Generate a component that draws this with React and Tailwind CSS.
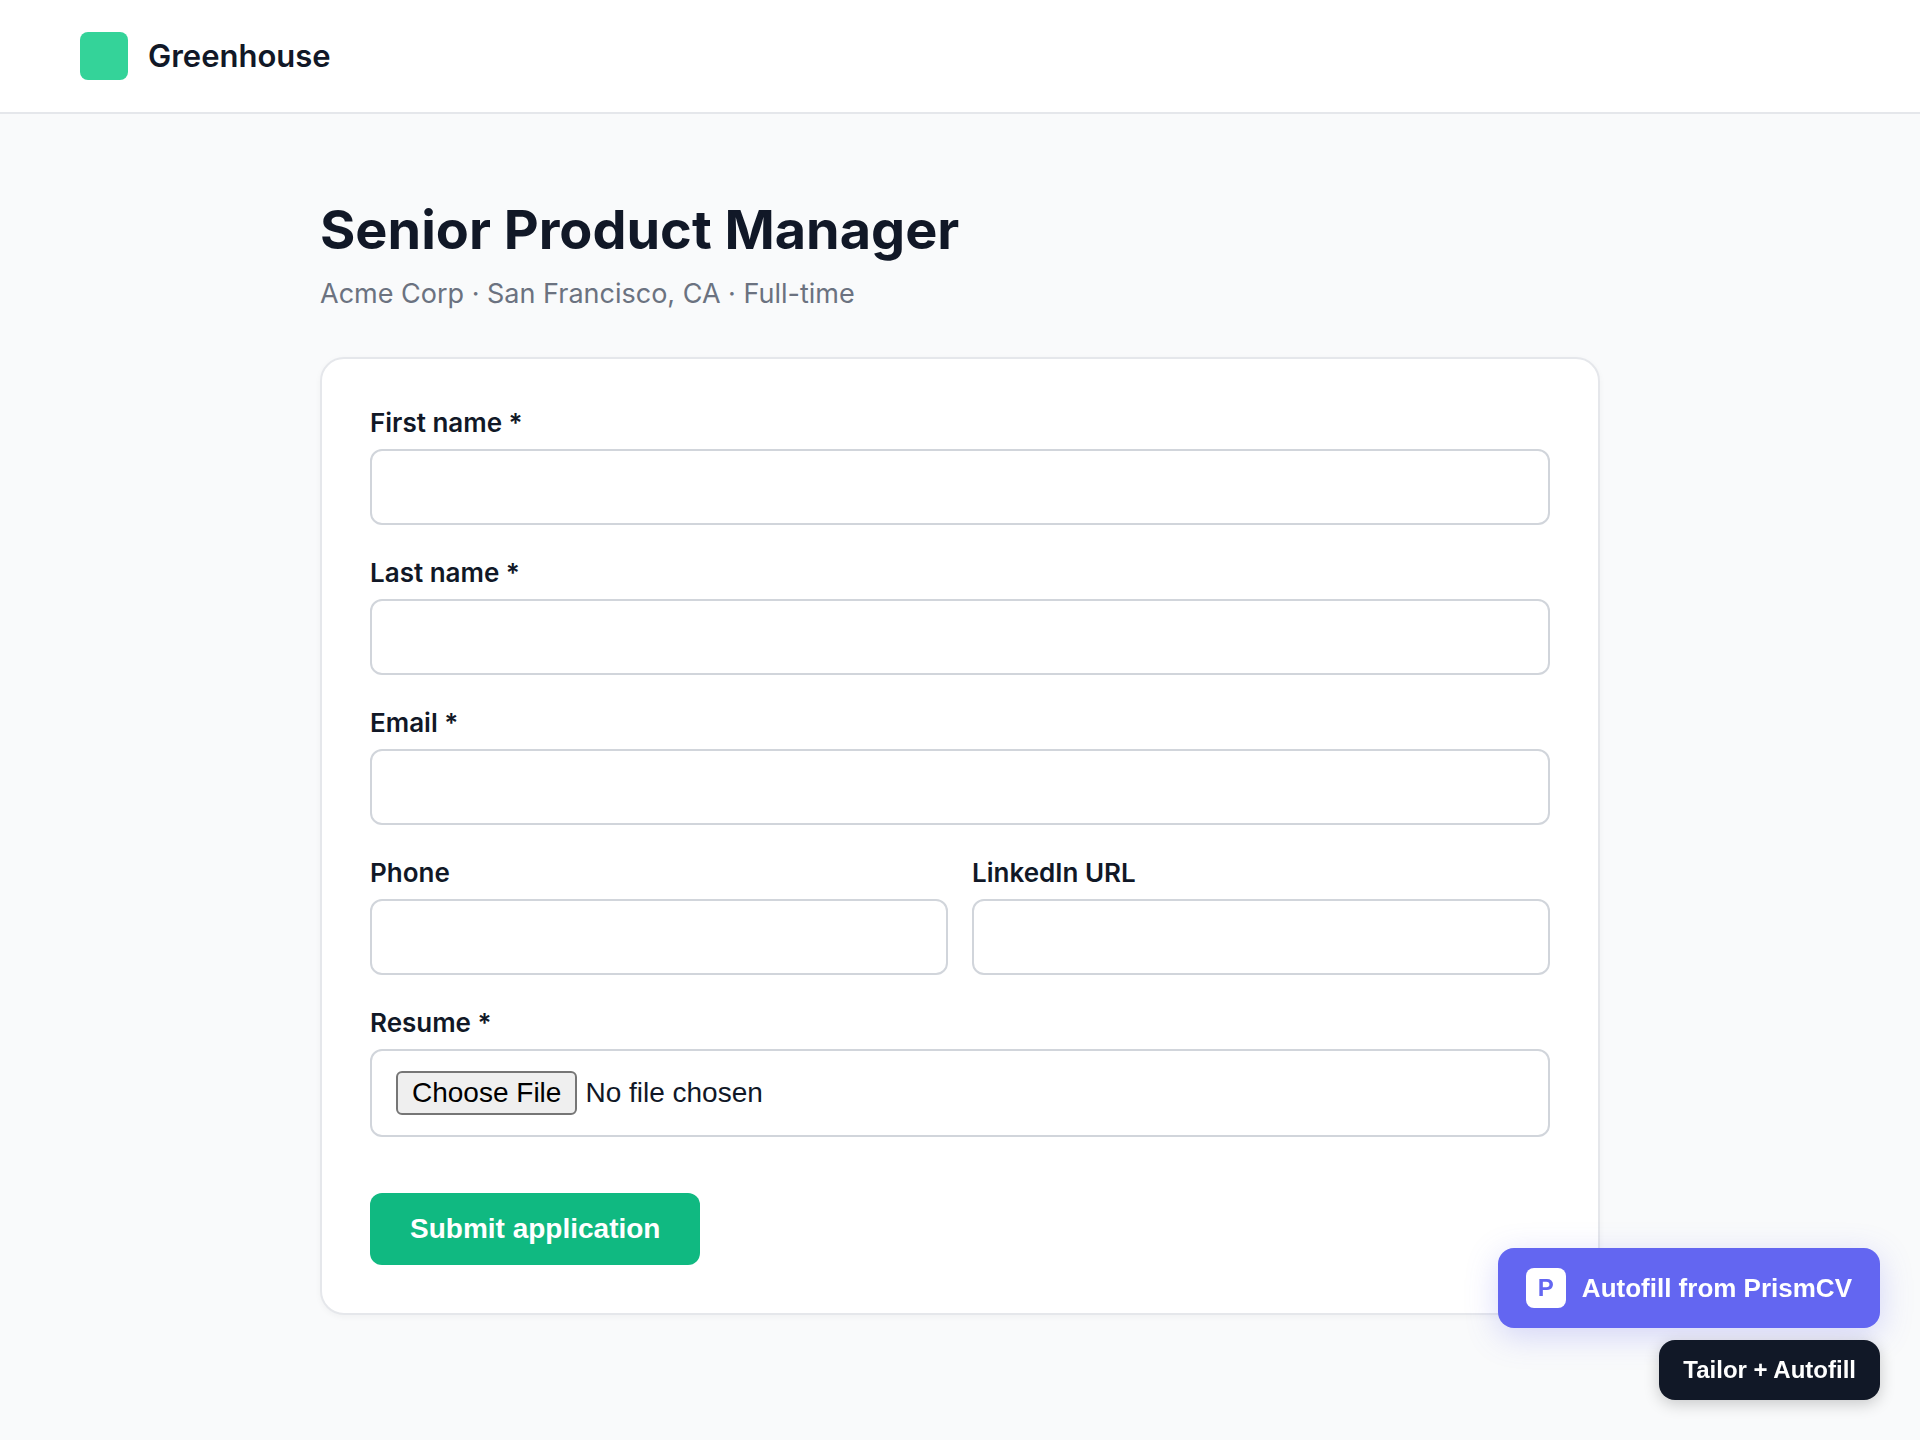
const labelClass = "mb-[10px] block text-[26px] leading-8 font-semibold";

const inputClass =
  "block h-[76px] w-full rounded-xl border-2 border-[#d1d5db] bg-white px-6 text-[28px] text-[#111827]";

function Field({ id, label, type = "text", required }) {
  return (
    <div>
      <label htmlFor={id} className={labelClass}>
        {label}
      </label>
      <input id={id} name={id} type={type} required={required} className={inputClass} />
    </div>
  );
}

export default function App() {
  return (
    <div className="min-h-screen bg-[#f9fafb] font-['Inter',sans-serif] text-[#111827]">
      <header className="flex items-center gap-5 border-b-2 border-[#e5e7eb] bg-white px-20 py-8">
        <div className="size-12 rounded-lg bg-[#34d399]" />
        <span className="text-[31px] leading-[48px] font-semibold">Greenhouse</span>
      </header>

      <main className="mx-auto max-w-[1280px] pt-20 pb-20">
        <h1 className="text-[54px] leading-[72px] font-bold">Senior Product Manager</h1>
        <p className="mt-3 text-[27px] leading-8 text-[#6b7280]">
          Acme Corp · San Francisco, CA · Full-time
        </p>

        <form
          onSubmit={(e) => e.preventDefault()}
          className="mt-[47px] flex flex-col gap-8 rounded-3xl border-2 border-[#e5e7eb] bg-white p-12 shadow-[0_2px_6px_rgba(0,0,0,0.04)]"
        >
          <Field id="first-name" label="First name *" required />
          <Field id="last-name" label="Last name *" required />
          <Field id="email" label="Email *" type="email" required />
          <div className="grid grid-cols-2 gap-6">
            <Field id="phone" label="Phone" type="tel" />
            <Field id="linkedin" label="LinkedIn URL" type="url" />
          </div>
          <div>
            <label htmlFor="resume" className={labelClass}>
              Resume *
            </label>
            <input
              id="resume"
              name="resume"
              type="file"
              className="block w-full rounded-xl border-2 border-[#d1d5db] bg-white px-6 py-5 font-['Liberation_Sans',sans-serif] text-[28px] leading-8 file:mr-2 file:h-11 file:rounded-md file:border-2 file:border-solid file:border-[#767676] file:bg-[#efefef] file:px-[14px] file:text-black"
            />
          </div>
          <button
            type="submit"
            className="mt-6 h-[72px] self-start rounded-xl bg-[#10b981] px-10 font-['Liberation_Sans',sans-serif] text-[28px] font-bold text-white"
          >
            Submit application
          </button>
        </form>
      </main>

      <div className="fixed right-10 bottom-10 flex flex-col items-end gap-3 font-['Liberation_Sans',sans-serif] font-bold text-white">
        <button
          type="button"
          className="flex h-20 items-center gap-4 rounded-2xl bg-[#6366f1] px-7 text-[26px] shadow-[0_8px_32px_rgba(99,102,241,0.25)]"
        >
          <span className="flex size-10 items-center justify-center rounded-lg bg-white text-2xl text-[#6366f1]">
            P
          </span>
          Autofill from PrismCV
        </button>
        <button
          type="button"
          className="h-[60px] rounded-2xl bg-[#111827] px-6 text-2xl shadow-[0_4px_16px_rgba(0,0,0,0.2)]"
        >
          Tailor + Autofill
        </button>
      </div>
    </div>
  );
}
